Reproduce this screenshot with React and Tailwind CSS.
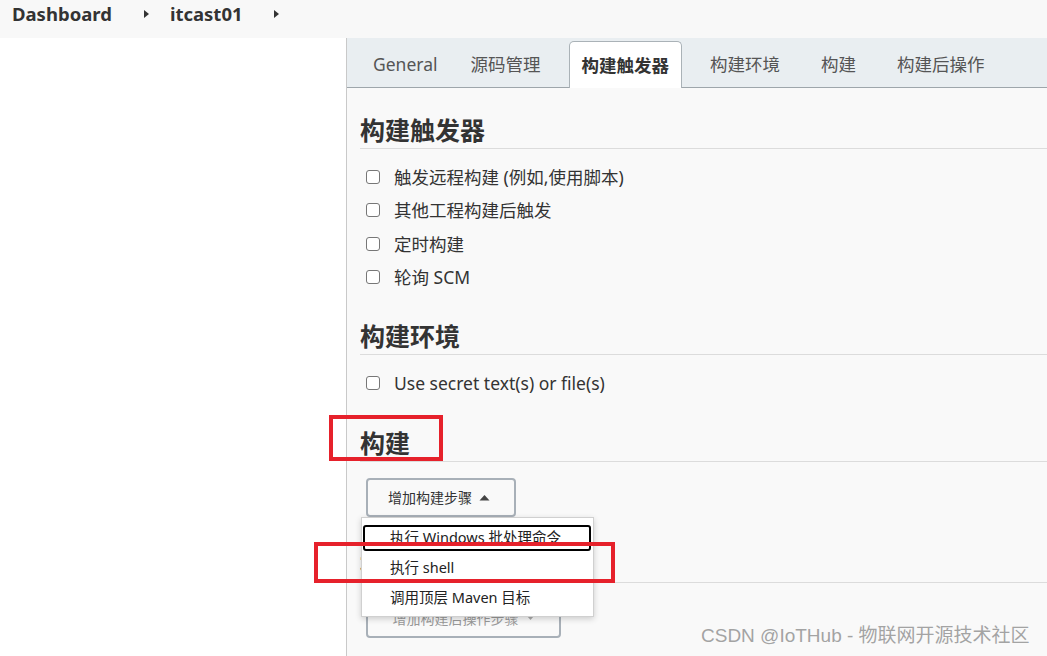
import React from "react";

const tabs = ["General", "源码管理", "构建触发器", "构建环境", "构建", "构建后操作"];

const Checkbox = ({ label }) => (
    <div className="flex h-[33.5px] items-center">
        <span className="ml-[6px] h-[14px] w-[14px] rounded-[3px] border-[1.5px] border-[#777] bg-white" />
        <span className="ml-[14px] text-[17.5px] text-[#333]">{label}</span>
    </div>
);

const Heading = ({ children, className }) => (
    <h2 className={"border-b border-[#dcdcdc] pb-[2px] text-[25px] font-bold leading-[32px] text-[#333] " + (className || "")}>
        {children}
    </h2>
);

const Caret = () => (
    <svg width="7" height="10" viewBox="0 0 7 10" className="fill-[#333]">
        <path d="M1 1 L6 5 L1 9 Z" />
    </svg>
);

export default function App() {
    return (
        <div className="relative h-[656px] w-[1047px] overflow-hidden bg-white font-['Noto_Sans','Noto_Sans_CJK_SC',sans-serif]">
            {/* breadcrumb */}
            <div className="flex h-[38px] items-center bg-[#f8f8f8] pb-[10px] pl-[12px] text-[18.5px] font-bold text-[#333]">
                <span>Dashboard</span>
                <span className="ml-[31px] mr-[20px]"><Caret /></span>
                <span>itcast01</span>
                <span className="ml-[30px]"><Caret /></span>
            </div>

            <div className="flex h-[618px]">
                <div className="w-[346px] bg-white" />
                <div className="flex-1 border-l border-[#c9c9c9] bg-[#f9f9f9]">
                    {/* tabs */}
                    <div className="flex h-[50px] items-end gap-[15px] border-b border-[#9ea6ab] bg-[#e9eef1] pl-[13px]">
                        {tabs.map((t) => (
                            t === "构建触发器" ? (
                                <div key={t} className="-mb-px flex h-[47px] items-center rounded-t-[5px] border border-b-0 border-[#aab2b7] bg-white px-[12px] text-[17.5px] font-bold text-[#333]">
                                    {t}
                                </div>
                            ) : (
                                <div key={t} className={"flex h-[46px] items-center pl-[13px] text-[17.5px] text-[#555] " + (t === "General" ? "pr-[5px]" : "pr-[13px]")}>
                                    {t}
                                </div>
                            )
                        ))}
                    </div>

                    {/* content */}
                    <div className="pl-[13px]">
                        <Heading className="mt-[26px]">构建触发器</Heading>
                        <div className="mt-[11px]">
                            <Checkbox label="触发远程构建 (例如,使用脚本)" />
                            <Checkbox label="其他工程构建后触发" />
                            <Checkbox label="定时构建" />
                            <Checkbox label="轮询 SCM" />
                        </div>

                        <Heading className="mt-[26px]">构建环境</Heading>
                        <div className="mt-[11px]">
                            <Checkbox label="Use secret text(s) or file(s)" />
                        </div>

                        <Heading className="mt-[27px]">构建</Heading>
                        <button className="ml-[6px] mt-[16px] flex h-[39px] w-[150px] items-center justify-center gap-[7px] rounded-[4px] border-2 border-[#a8b0b8] bg-[#f9f9f9] pr-[4px] text-[14px] text-[#333]">
                            增加构建步骤
                            <svg width="11" height="7" viewBox="0 0 11 7" className="fill-[#444]"><path d="M0.5 6.5 L5.5 1 L10.5 6.5 Z" /></svg>
                        </button>

                        <Heading className="mt-[31px]">构建后操作</Heading>
                        <button className="ml-[6px] mt-[16px] flex h-[39px] w-[195px] items-center justify-center gap-[7px] rounded-[4px] border-2 border-[#a8b0b8] bg-[#f9f9f9] text-[14px] text-[#999]">
                            增加构建后操作步骤
                            <svg width="9" height="6" viewBox="0 0 9 6" className="fill-[#aaa]"><path d="M0.5 0.5 L4.5 5 L8.5 0.5 Z" /></svg>
                        </button>
                    </div>
                </div>
            </div>

            {/* dropdown menu */}
            <div className="absolute left-[361px] top-[517px] w-[233px] border border-[#d0d0d0] bg-white pb-[3px] pt-[5px] text-[14.5px] text-[#222] shadow-[0_2px_6px_rgba(0,0,0,0.18)]">
                <div className="flex h-[30px] items-center">
                    <div className="ml-[1px] mr-[2px] flex h-[26px] flex-1 items-center rounded-[3px] border-2 border-black pl-[25px]">
                        执行 Windows 批处理命令
                    </div>
                </div>
                <div className="flex h-[30px] items-center pl-[28px]">执行 shell</div>
                <div className="flex h-[30px] items-center pl-[28px]">调用顶层 Maven 目标</div>
            </div>

            {/* annotations */}
            <div className="absolute left-[329px] top-[415px] h-[46px] w-[114px] border-4 border-[#e6212b]" />
            <div className="absolute left-[314px] top-[542px] h-[41px] w-[301px] border-4 border-[#e6212b]" />

            <div className="absolute left-[701px] top-[623px] text-[19px] leading-[26px] text-[#a3a3a3] font-['Liberation_Sans','Noto_Sans_CJK_SC',sans-serif] [text-shadow:0_0_1px_rgba(255,255,255,0.9)]">
                CSDN @IoTHub - 物联网开源技术社区
            </div>
        </div>
    );
}
